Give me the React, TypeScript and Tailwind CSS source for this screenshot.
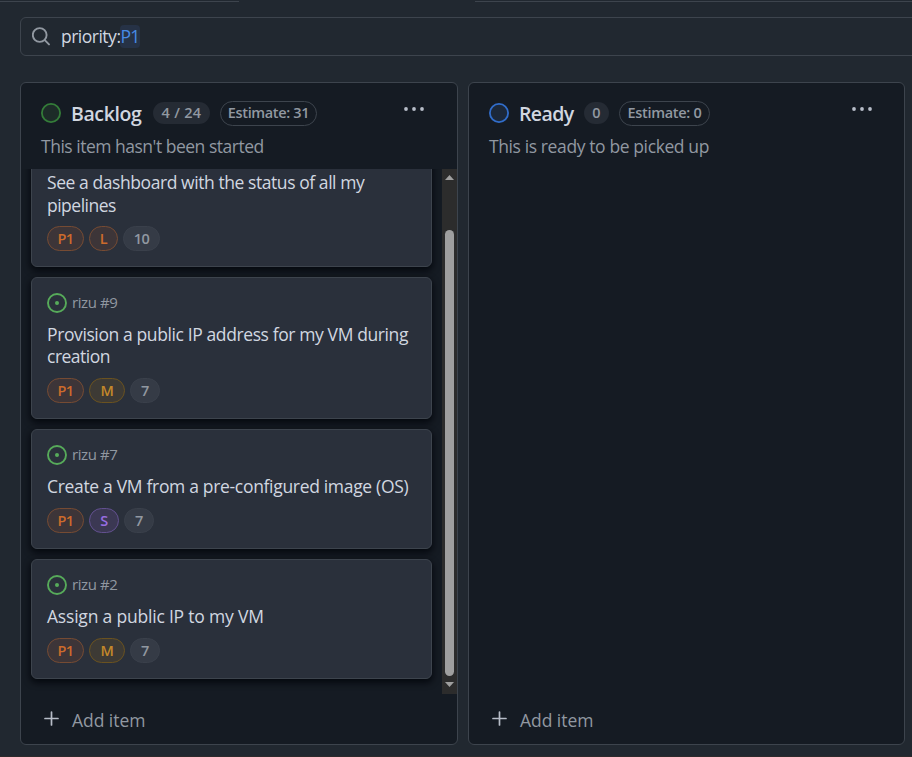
import React from "react";

type Tag = { label: string; tone: string; width: string };

const ORANGE = "border-[#764b33] bg-[#3d3538] text-[#cc6b2c]";
const YELLOW = "border-[#6a5220] bg-[#3d3a35] text-[#c4892a]";
const PURPLE = "border-[#62508f] bg-[#3b3853] text-[#986ee2]";
const GRAY = "border-[#3a404b] bg-[#353b46] text-[#9198a1]";

const P1: Tag = { label: "P1", tone: ORANGE, width: "w-[37px]" };
const M: Tag = { label: "M", tone: YELLOW, width: "w-[36px]" };
const SEVEN: Tag = { label: "7", tone: GRAY, width: "w-[30px]" };

function Pill({ tag }: { tag: Tag }) {
  return (
    <span
      className={`flex h-[25px] items-center justify-center rounded-full border text-[14.5px] font-semibold tracking-[-0.5px] ${tag.tone} ${tag.width}`}
    >
      {tag.label}
    </span>
  );
}

type Line = { text: string; spacing: string };

function Card({ number, lines, tags, leading }: { number?: string; lines: Line[]; tags: Tag[]; leading: string }) {
  return (
    <article className="w-[401px] shrink-0 rounded-[6px] border border-[#3d444d] bg-[#2a303b] p-[15px] shadow-[0_3px_6px_1px_rgba(1,4,9,0.75)]">
      <div className="flex h-5 items-center gap-[5px]">
        {number && (
          <>
            <svg width="20" height="20" viewBox="0 0 20 20" fill="none">
              <circle cx="10" cy="10" r="9" stroke="#57ab5a" strokeWidth="1.9" />
              <circle cx="10" cy="10" r="2" fill="#57ab5a" />
            </svg>
            <span className="mb-[2px] text-[15px] leading-5 tracking-[-0.42px] text-[#9198a1]">rizu {number}</span>
          </>
        )}
      </div>
      <h3 className={`text-[17.5px] text-[#d1d7e0] ${leading}`}>
        {lines.map((l) => (
          <span key={l.text} className={`block whitespace-nowrap ${l.spacing}`}>{l.text}</span>
        ))}
      </h3>
      <div className="flex gap-[5px]">
        {tags.map((t) => <Pill key={t.label} tag={t} />)}
      </div>
    </article>
  );
}

function Scrollbar() {
  return (
    <div className="flex w-[15px] flex-col items-center bg-[#2c2c2c] pt-[6px] pb-[7px]">
      <svg width="9" height="5" viewBox="0 0 9 5"><path d="M4.5 0L9 5H0z" fill="#9f9f9f" /></svg>
      <div className="mt-[50px] h-[446px] w-[9px] rounded-full bg-[#9f9f9f]" />
      <svg className="mt-[6px]" width="9" height="5" viewBox="0 0 9 5"><path d="M4.5 5L0 0H9z" fill="#9f9f9f" /></svg>
    </div>
  );
}

type ColumnProps = {
  title: string;
  titleBox: string;
  count: string;
  countBox: string;
  estimate: string;
  estimateBox: string;
  description: string;
  descriptionSpacing: string;
  ring: string;
  fill: string;
  width: string;
  menuMargin: string;
  children?: React.ReactNode;
};

function Column(p: ColumnProps) {
  return (
    <section className={`flex h-[663px] shrink-0 flex-col rounded-[6px] border border-[#3d444d] bg-[#151b23] ${p.width}`}>
      <header className="h-[86px] shrink-0 px-5 pt-[17px]">
        <div className="flex h-[26px] items-center">
          <svg width="20" height="20" viewBox="0 0 20 20">
            <circle cx="10" cy="10" r="9.1" stroke={p.ring} fill={p.fill} strokeWidth="1.8" />
          </svg>
          <h2 className={`mt-[2px] ml-[10px] whitespace-nowrap text-[19.5px] leading-[26px] font-semibold text-[#d1d7e0] ${p.titleBox}`}>{p.title}</h2>
          <span className={`flex h-[22px] items-center justify-center rounded-full bg-[#252b34] text-[14.5px] font-semibold whitespace-nowrap text-[#9198a1] ${p.countBox}`}>{p.count}</span>
          <span className={`ml-[10px] flex h-[25px] items-center justify-center rounded-full border border-[#3d444d] text-[14.5px] font-semibold whitespace-nowrap text-[#9198a1] ${p.estimateBox}`}>{p.estimate}</span>
          <svg className={`mb-[8px] ml-auto ${p.menuMargin}`} width="22" height="6" viewBox="0 0 22 6" fill="#b7bdc8">
            <circle cx="3" cy="3" r="1.9" />
            <circle cx="11" cy="3" r="1.9" />
            <circle cx="19" cy="3" r="1.9" />
          </svg>
        </div>
        <p className={`mt-[8px] whitespace-nowrap text-[17.5px] leading-6 text-[#9198a1] ${p.descriptionSpacing}`}>{p.description}</p>
      </header>
      <div className="flex h-[525px] shrink-0 justify-between overflow-hidden">
        {p.children}
      </div>
      <button className="flex h-[50px] items-center pl-[22px] text-left">
        <svg className="mb-[2px]" width="17" height="17" viewBox="0 0 17 17" stroke="#b7bdc8" strokeWidth="1.7" strokeLinecap="round">
          <path d="M8.5 2v13M2 8.5h13" />
        </svg>
        <span className="mt-[2px] ml-3 text-[17.5px] tracking-[-0.05px] font-medium text-[#9198a1]">Add item</span>
      </button>
    </section>
  );
}

export default function App() {
  return (
    <main className="flex h-[757px] w-[912px] flex-col overflow-hidden bg-[#212830] font-['Open_Sans','Noto_Sans',sans-serif]">
      <div className="mt-px flex h-px shrink-0 justify-between">
        <div className="w-[239px] bg-[#3d444d]" />
        <div className="w-[437px] bg-[#3d444d]" />
      </div>
      <div className="mt-[15px] ml-5 flex h-[39px] w-[920px] shrink-0 items-center rounded-[6px] border border-[#3d444d] pl-[11px]">
        <svg width="19" height="19" viewBox="0 0 19 19" fill="none" stroke="#9198a1" strokeWidth="1.9" strokeLinecap="round">
          <circle cx="7.7" cy="8" r="6.9" />
          <path d="M12.8 13.1L17 17.4" />
        </svg>
        <span className="ml-[10px] w-[59px] whitespace-nowrap text-[17.5px] tracking-[-0.5px] text-[#d1d7e0]">priority:</span>
        <span className="flex h-[23px] w-[20px] items-center justify-center rounded-[4px] bg-[#263246] text-[17.5px] tracking-[-0.8px] text-[#478be6]">P1</span>
      </div>
      <div className="mt-[26px] ml-5 flex shrink-0 gap-[10px]">
        <Column
          title="Backlog" titleBox="w-[82px] tracking-[-0.4px]" count="4 / 24" countBox="w-[57px] tracking-[0.3px]"
          estimate="Estimate: 31" estimateBox="w-[97px] tracking-[-0.35px]"
          description="This item hasn't been started" descriptionSpacing="tracking-[-0.49px]"
          ring="#347d39" fill="#1d2c28" width="w-[438px]" menuMargin="mr-[12px]"
        >
          <div className="flex w-[421px] flex-col justify-end gap-[10px] overflow-hidden pb-[15px] pl-[10px]">
            <Card leading="pt-3 pb-[9px] leading-[23px]" lines={[
              { text: "See a dashboard with the status of all my", spacing: "tracking-[-0.43px]" },
              { text: "pipelines", spacing: "tracking-[-0.5px]" },
            ]} tags={[P1, { label: "L", tone: ORANGE, width: "w-[29px]" }, { label: "10", tone: GRAY, width: "w-[37px]" }]} />
            <Card number="#9" leading="pt-[10px] pb-[11px] leading-[22px]" lines={[
              { text: "Provision a public IP address for my VM during", spacing: "tracking-[-0.39px]" },
              { text: "creation", spacing: "tracking-[-0.5px]" },
            ]} tags={[P1, M, SEVEN]} />
            <Card number="#7" leading="pt-[10px] pb-[11px] leading-[22px]" lines={[
              { text: "Create a VM from a pre-configured image (OS)", spacing: "tracking-[-0.32px]" },
            ]} tags={[P1, { label: "S", tone: PURPLE, width: "w-[30px]" }, SEVEN]} />
            <Card number="#2" leading="pt-[10px] pb-[11px] leading-[22px]" lines={[
              { text: "Assign a public IP to my VM", spacing: "tracking-[-0.2px]" },
            ]} tags={[P1, M, SEVEN]} />
          </div>
          <Scrollbar />
        </Column>
        <Column
          title="Ready" titleBox="w-[65px] tracking-[-0.6px]" count="0" countBox="w-[25px]"
          estimate="Estimate: 0" estimateBox="w-[91px] tracking-[-0.3px]"
          description="This is ready to be picked up" descriptionSpacing="tracking-[-0.39px]"
          ring="#316dca" fill="#1c2839" width="w-[437px]" menuMargin="mr-[11px]"
        />
      </div>
      <div className="mt-auto h-px shrink-0 bg-[#2d2a2b]" />
    </main>
  );
}
